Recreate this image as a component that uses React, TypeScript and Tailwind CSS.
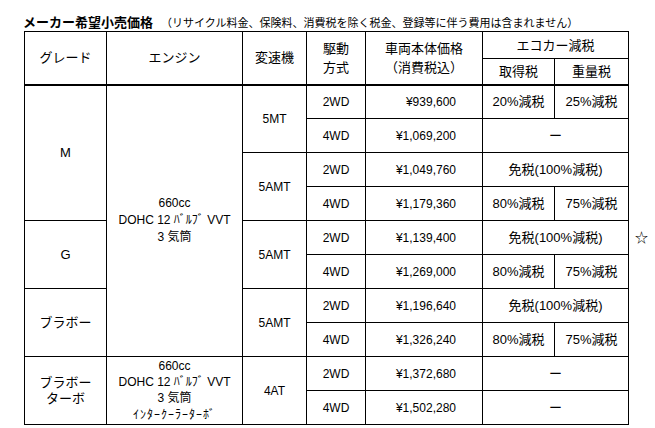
const cell = "border border-black p-0 text-center align-middle";
const head = "border border-black p-0 text-center align-middle font-normal text-[13px] leading-[19px]";

type Row = {
  grade?: { label: React.ReactNode; span: number };
  engine?: { lines: React.ReactNode; span: number };
  trans?: { label: string; span: number };
  drive: string;
  price: string;
  tax: [string, string] | string;
  note?: string;
};

const engineMain = (
  <div className="leading-[17px]">
    660cc
    <br />
    DOHC 12 ﾊﾞﾙﾌﾞ VVT
    <br />3 気筒
  </div>
);

const engineTurbo = (
  <div className="leading-[16px]">
    660cc
    <br />
    DOHC 12 ﾊﾞﾙﾌﾞ VVT
    <br />3 気筒
    <br />
    <span className="text-[12px] tracking-[1px] font-['Noto_Sans_CJK_JP',sans-serif]">ｲﾝﾀｰｸｰﾗｰﾀｰﾎﾞ</span>
  </div>
);

const rows: Row[] = [
  { grade: { label: "M", span: 4 }, engine: { lines: engineMain, span: 8 }, trans: { label: "5MT", span: 2 }, drive: "2WD", price: "¥939,600", tax: ["20%減税", "25%減税"] },
  { drive: "4WD", price: "¥1,069,200", tax: "ー" },
  { trans: { label: "5AMT", span: 2 }, drive: "2WD", price: "¥1,049,760", tax: "免税(100%減税)" },
  { drive: "4WD", price: "¥1,179,360", tax: ["80%減税", "75%減税"] },
  { grade: { label: "G", span: 2 }, trans: { label: "5AMT", span: 2 }, drive: "2WD", price: "¥1,139,400", tax: "免税(100%減税)", note: "☆" },
  { drive: "4WD", price: "¥1,269,000", tax: ["80%減税", "75%減税"] },
  { grade: { label: "ブラボー", span: 2 }, trans: { label: "5AMT", span: 2 }, drive: "2WD", price: "¥1,196,640", tax: "免税(100%減税)" },
  { drive: "4WD", price: "¥1,326,240", tax: ["80%減税", "75%減税"] },
  {
    grade: { label: <div className="leading-[16px]">ブラボー<br />ターボ</div>, span: 2 },
    engine: { lines: engineTurbo, span: 2 },
    trans: { label: "4AT", span: 2 },
    drive: "2WD",
    price: "¥1,372,680",
    tax: "ー",
  },
  { drive: "4WD", price: "¥1,502,280", tax: "ー" },
];

export default function App() {
  return (
    <div className="min-h-screen w-[655px] bg-white pt-[14px] pl-[23px] text-black font-['Liberation_Sans','Noto_Sans_CJK_JP',sans-serif]">
      <p className="leading-[16px] whitespace-nowrap">
        <span className="text-[13px] font-bold">メーカー希望小売価格</span>
        <span className="ml-[8px] text-[11px]">（リサイクル料金、保険料、消費税を除く税金、登録等に伴う費用は含まれません）</span>
      </p>

      <table className="ml-px table-fixed border-collapse w-[630px] text-[12px]">
        <colgroup>
          <col className="w-[82px]" />
          <col className="w-[136px]" />
          <col className="w-[64px]" />
          <col className="w-[59px]" />
          <col className="w-[117px]" />
          <col className="w-[72px]" />
          <col className="w-[74px]" />
          <col className="w-[26px]" />
        </colgroup>
        <thead>
          <tr className="h-[27px]">
            <th rowSpan={2} className={`${head} border-b-2`}>グレード</th>
            <th rowSpan={2} className={`${head} border-b-2`}>エンジン</th>
            <th rowSpan={2} className={`${head} border-b-2`}>変速機</th>
            <th rowSpan={2} className={`${head} border-b-2`}>
              駆動
              <br />
              方式
            </th>
            <th rowSpan={2} className={`${head} border-b-2`}>
              車両本体価格
              <br />
              （消費税込）
            </th>
            <th colSpan={2} className={head}>エコカー減税</th>
            <th rowSpan={2} className="p-0" />
          </tr>
          <tr className="h-[26px]">
            <th className={`${head} border-b-2`}>取得税</th>
            <th className={`${head} border-b-2`}>重量税</th>
          </tr>
        </thead>
        <tbody>
          {rows.map((r, i) => (
            <tr key={i} className="h-[34px]">
              {r.grade && (
                <td rowSpan={r.grade.span} className={`${cell} text-[13px]`}>
                  {r.grade.label}
                </td>
              )}
              {r.engine && (
                <td rowSpan={r.engine.span} className={cell}>
                  {r.engine.lines}
                </td>
              )}
              {r.trans && (
                <td rowSpan={r.trans.span} className={cell}>
                  {r.trans.label}
                </td>
              )}
              <td className={cell}>{r.drive}</td>
              <td className={`${cell} text-right pr-[26px]`}>{r.price}</td>
              {typeof r.tax === "string" ? (
                <td colSpan={2} className={`${cell} text-[13px]`}>
                  {r.tax}
                </td>
              ) : (
                <>
                  <td className={`${cell} text-[13px]`}>{r.tax[0]}</td>
                  <td className={`${cell} text-[13px]`}>{r.tax[1]}</td>
                </>
              )}
              <td className="p-0 pl-[6px] text-left align-middle text-[13px]">{r.note}</td>
            </tr>
          ))}
        </tbody>
      </table>
    </div>
  );
}
